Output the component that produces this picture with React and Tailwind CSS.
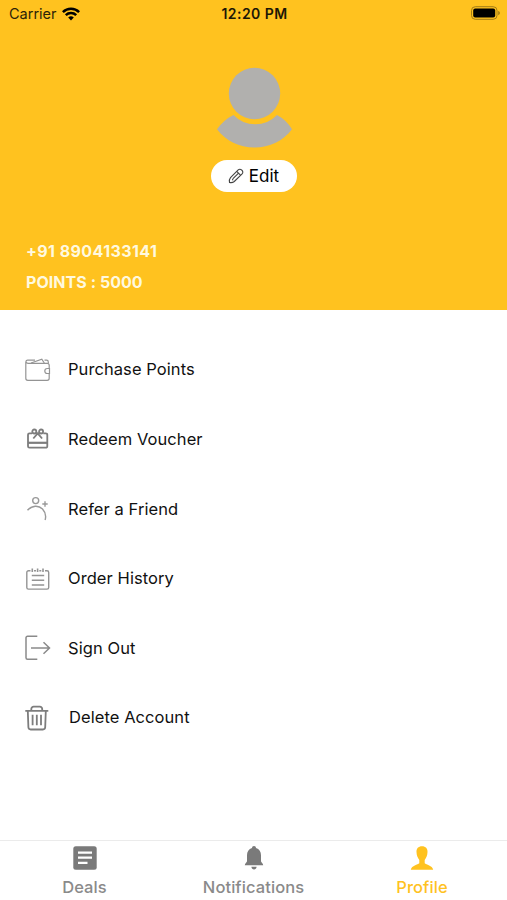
const WalletIcon = () => (
  <svg width="28" height="28" viewBox="0 0 28 28" fill="none" stroke="#949494" strokeWidth="1.200">
    <path d="M26.200 12V9.300a2 2 0 0 0-2-2H5A2.200 2.200 0 0 1 2.800 5.400V22.300a2 2 0 0 0 2 2h19.400a2 2 0 0 0 2-2V18" />
    <path d="M2.800 5.500A2 2 0 0 1 5 4.200h7M25.300 7.800V6a1.800 1.800 0 0 0-1.800-1.800h-2" />
    <path d="M8 7L18.800 3.200l2.500 3.800" />
    <path d="M26.500 12.500h-2.200a2.500 2.500 0 0 0 0 5h2.200z" />
  </svg>
);

const GiftIcon = () => (
  <svg width="28" height="28" viewBox="0 0 28 28" fill="none" stroke="#7d7d7d" strokeWidth="1.800">
    <path d="M9 8.300H6.500A1.500 1.500 0 0 0 5 9.800v11.400a1.500 1.500 0 0 0 1.500 1.500h16.300a1.500 1.500 0 0 0 1.500-1.500V9.800a1.500 1.500 0 0 0-1.500-1.500h-2.500" />
    <path d="M5 17.800h19.300" strokeWidth="2.200" />
    <circle cx="11.300" cy="6.500" r="2" />
    <circle cx="18.100" cy="6.500" r="2" />
    <path d="M12.800 8.200h3.800M14.700 8.300L10.300 13.500M14.700 8.300L19.100 13.500" />
  </svg>
);

const ReferIcon = () => (
  <svg width="28" height="28" viewBox="0 0 28 28" fill="none" stroke="#999" strokeWidth="1.400">
    <circle cx="12.700" cy="5.600" r="3" />
    <path d="M4.500 15.300C9 10.300 15.500 10 19.500 14c3 3.200 3.800 7 2.600 11" />
    <path d="M22 6.300v5.400M19.300 9h5.400" />
  </svg>
);

const HistoryIcon = () => (
  <svg width="28" height="28" viewBox="0 0 28 28" fill="none" stroke="#949494" strokeWidth="1.400">
    <path d="M7.500 5.700h-2a1.700 1.700 0 0 0-1.700 1.700v15a1.700 1.700 0 0 0 1.700 1.700h18.500a1.700 1.700 0 0 0 1.700-1.700v-15A1.700 1.700 0 0 0 24 5.700h-2" />
    <path d="M9.300 3.500v3.600M14.600 3.500v3.600M20 3.500v3.600" strokeWidth="1.600" />
    <path d="M11 5.700h2M16.300 5.700h2" />
    <path d="M8.800 10.500h12.400M8.800 15.300h12.400M8.800 20h12.400" />
  </svg>
);

const SignOutIcon = () => (
  <svg width="28" height="28" viewBox="0 0 28 28" fill="none" stroke="#8a8a8a" strokeWidth="1.500">
    <path d="M14.300 2.300H4.500a1.500 1.500 0 0 0-1.500 1.500v20a1.500 1.500 0 0 0 1.500 1.500h9.800" />
    <path d="M8 14h18.500M20.500 8.300l6 5.700-6 5.700" />
  </svg>
);

const TrashIcon = () => (
  <svg width="28" height="28" viewBox="0 0 28 28" fill="none" stroke="#7d7d7d" strokeWidth="1.800">
    <path d="M2.300 6.800h23M8.300 6.800V5a2.300 2.300 0 0 1 2.300-2.300h6.300A2.300 2.300 0 0 1 19.200 5v1.800" />
    <path d="M4.800 7l.6 16.300a2.300 2.300 0 0 0 2.300 2.200h12.200a2.300 2.300 0 0 0 2.300-2.200L22.800 7" />
    <path d="M9.600 10.800v10.400M13.800 10.800v10.400M18 10.800v10.400" />
  </svg>
);

const DealsIcon = () => (
  <svg width="28" height="28" viewBox="0 0 28 28">
    <rect x="2.300" y="2.300" width="23.400" height="23.400" rx="2.500" fill="#7a7a7a" />
    <path d="M7 8.600h14M7 13.600h14M7 18.900h9.500" stroke="#fff" strokeWidth="2.400" />
  </svg>
);

const BellIcon = () => (
  <svg width="28" height="28" viewBox="0 0 28 28" fill="#7a7a7a">
    <path d="M14 2.100c-1.300 0-1.900.8-2 1.900-3.300 1-5 3.700-5 7.300v6c0 1-2.200 2.300-2.200 3.900h18.400c0-1.600-2.200-2.900-2.200-3.900v-6c0-3.600-1.700-6.300-5-7.300-.1-1.100-.7-1.900-2-1.900z" />
    <path d="M11.400 22.800h5.200c-.2 1.800-1.200 2.800-2.600 2.800s-2.400-1-2.600-2.800z" />
  </svg>
);

const ProfileIcon = () => (
  <svg width="28" height="28" viewBox="0 0 28 28" fill="#ffc21f">
    <path d="M14 2.300c-3.700 0-5.700 2.300-5.500 5.800.1 3.300 1.200 6.200 2.800 7.800v3.300c-1.500 1.700-7.600 2-8.500 6.500h22.400c-.9-4.500-7-4.800-8.500-6.500v-3.300c1.600-1.600 2.700-4.500 2.800-7.800C19.700 4.600 17.700 2.300 14 2.300z" />
  </svg>
);

const menuItems = [
  { label: "Purchase Points", Icon: WalletIcon },
  { label: "Redeem Voucher", Icon: GiftIcon },
  { label: "Refer a Friend", Icon: ReferIcon },
  { label: "Order History", Icon: HistoryIcon },
  { label: "Sign Out", Icon: SignOutIcon },
  { label: "Delete Account", Icon: TrashIcon, className: "pl-px" },
];

const tabs = [
  { label: "Deals", Icon: DealsIcon },
  { label: "Notifications", Icon: BellIcon },
  { label: "Profile", Icon: ProfileIcon, active: true },
];

const StatusBar = () => (
  <div className="grid h-7 grid-cols-[1fr_auto_1fr] items-center pl-[9px] pr-[6px] text-[#2b2308]">
    <div className="flex items-center gap-[5px] pb-px">
      <span className="text-[14.500px]">Carrier</span>
      <svg width="18" height="14" viewBox="0 0 18 14" fill="none" stroke="#000" strokeWidth="2.500">
        <path d="M.9 5.100a11.500 11.500 0 0 1 16.200 0" />
        <path d="M3.800 8.200a7.400 7.400 0 0 1 10.400 0" />
        <path d="M9 13.500l-2.800-2.900a4 4 0 0 1 5.600 0z" fill="#000" stroke="none" />
      </svg>
    </div>
    <span className="pb-px pr-px text-center text-[14px] font-semibold tracking-[0.450px] text-[#1c1706]">
      12:20 PM
    </span>
    <svg className="mb-[2px] justify-self-end" width="31" height="14" viewBox="0 0 31 14">
      <rect x="1.500" y=".7" width="25.500" height="12.600" rx="3.800" fill="none" stroke="#a27c16" strokeWidth="1" />
      <rect x="3.200" y="2.500" width="22" height="9" rx="2" fill="#000" />
      <path d="M28.200 5v4.200c1.100-.3 1.700-1.100 1.700-2.100s-.6-1.800-1.700-2.100z" fill="#a27c16" />
    </svg>
  </div>
);

const ProfileHeader = () => (
  <header className="h-[310px] bg-[#ffc21f]">
    <StatusBar />
    <div className="flex flex-col items-center pt-[38px]">
      <svg width="78" height="84" viewBox="0 0 78 84" fill="#b1b0ae">
        <circle cx="39.500" cy="27.500" r="25.700" />
        <path d="M18.500 49a30 30 0 0 0 43.500 0q9.500 5 15 14.300C68 75 55 81.500 39.500 81.500S11 75 2 63.300Q9 53.500 18.500 49z" />
      </svg>
      <button className="mt-[9.500px] flex h-8 w-[86px] items-center justify-center gap-[5px] rounded-full bg-white text-[17px] text-black">
        <svg width="16" height="16" viewBox="0 0 16 16" fill="none" stroke="#444" strokeWidth="1.100">
          <path d="M1.500 14.500q-.6-2.800 1-4.800l7.700-7.800a2.300 2.300 0 0 1 3.300 0l.6.600a2.300 2.300 0 0 1 0 3.300l-7.800 7.700q-2 1.600-4.800 1z" />
          <path d="M8.700 3.400l3.800 3.800M10.300 5.400L5 10.700M5 10.700q-1 1.500.3 1" />
        </svg>
        <span className="pt-[2px]">Edit</span>
      </button>
    </div>
    <div className="space-y-[7px] pl-[26px] pt-[47.500px] text-[16px] font-bold leading-6 text-[#fff9df]">
      <p className="tracking-[0.430px]">+91 8904133141</p>
      <p className="tracking-[0.050px]">POINTS : 5000</p>
    </div>
  </header>
);

const App = () => {
  return (
    <div className="flex h-[900px] w-[507px] flex-col overflow-hidden bg-white font-['Inter',sans-serif]">
      <ProfileHeader />

      <ul className="flex-1 pt-[25px] text-[16.500px] tracking-[0.070px] text-[#111]">
        {menuItems.map(({ label, Icon, className }) => (
          <li key={label} className="flex h-[69.600px] items-center pl-[23px]">
            <Icon />
            <span className={`ml-[17px] ${className || ""}`}>{label}</span>
          </li>
        ))}
      </ul>

      <nav className="grid h-[60px] grid-cols-3 border-t border-[#ebebeb]">
        {tabs.map(({ label, Icon, active }) => (
          <div
            key={label}
            className={`flex flex-col items-center pt-[3px] text-[16.500px] font-medium leading-6 tracking-[0.080px] ${
              active ? "pr-px text-[#ffc21f]" : "text-[#8a8a8a]"
            }`}
          >
            <Icon />
            <span className="mt-[3px]">{label}</span>
          </div>
        ))}
      </nav>
    </div>
  );
};

export default App;
